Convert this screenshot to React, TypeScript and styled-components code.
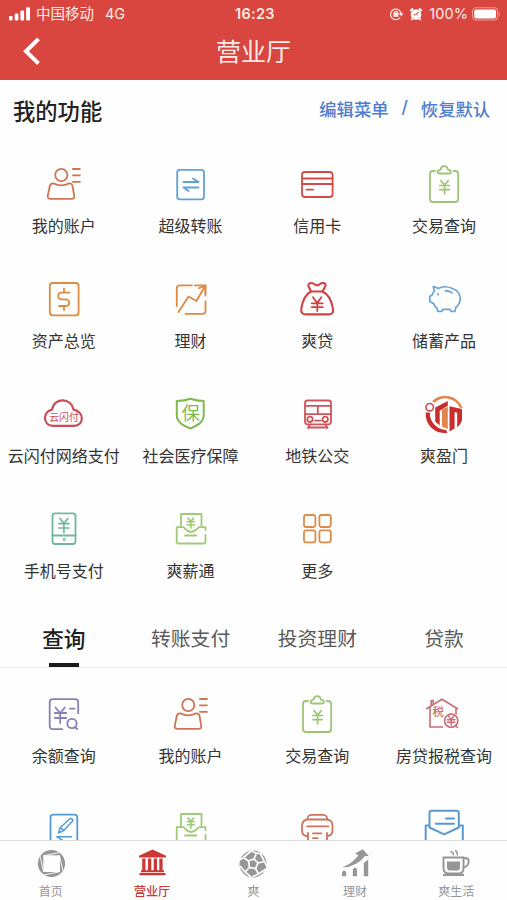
import React from "react";
import styled, { createGlobalStyle } from "styled-components";

const GlobalStyle = createGlobalStyle`
  * { box-sizing: border-box; }
  body { margin: 0; background: #fff; }
`;

const Screen = styled.div`
  width: 507px;
  height: 900px;
  display: flex;
  flex-direction: column;
  overflow: hidden;
  background: #fefefe;
  color: #333;
  font-family: Inter, "Noto Sans CJK SC", sans-serif;
`;

const Header = styled.header`
  flex: none;
  height: 80px;
  background: #d94640;
  color: #ffebe6;
`;

const StatusBar = styled.div`
  display: grid;
  grid-template-columns: 1fr auto 1fr;
  align-items: center;
  height: 28px;
  padding: 0 6px 0 9px;
  font-size: 14.5px;
  line-height: 28px;
`;

const StatusGroup = styled.div<{ $end?: boolean }>`
  display: flex;
  align-items: center;
  justify-content: ${(p) => (p.$end ? "flex-end" : "flex-start")};
  white-space: nowrap;
`;

const Carrier = styled.span`
  margin-left: 5px;
`;

const Network = styled.span`
  margin-left: 11px;
`;

const Clock = styled.span`
  font-weight: 600;
  letter-spacing: 0.3px;
`;

const BatteryText = styled.span`
  margin: 0 4px 0 6px;
  letter-spacing: 0.1px;
`;

const AlarmSlot = styled.span`
  display: flex;
  margin-left: 6px;
`;

const TitleBar = styled.div`
  display: grid;
  grid-template-columns: 60px 1fr 60px;
  align-items: center;
  height: 45px;
`;

const BackButton = styled.button`
  display: flex;
  padding: 0 0 0 22px;
  border: 0;
  background: none;
`;

const Title = styled.h1`
  margin: 0;
  padding-top: 2px;
  text-align: center;
  font-size: 25px;
  font-weight: 400;
  line-height: 45px;
`;

const Main = styled.main`
  flex: 1;
  min-height: 0;
  overflow: hidden;
`;

const SectionHead = styled.div`
  display: flex;
  align-items: center;
  justify-content: space-between;
  height: 62px;
  padding: 0 17px 0 13px;
`;

const SectionTitle = styled.h2`
  margin: 0;
  padding-top: 1px;
  font-size: 22.3px;
  font-weight: 500;
  line-height: 62px;
  color: #222;
`;

const Actions = styled.div`
  display: flex;
  gap: 13px;
  padding-bottom: 6px;
  font-size: 17.3px;
  font-weight: 500;
  color: #4f7dcf;
`;

const Grid = styled.div<{ $top: number; $height: number }>`
  display: grid;
  grid-template-columns: repeat(4, 1fr);
  grid-auto-rows: 115px;
  height: ${(p) => p.$height}px;
  padding-top: ${(p) => p.$top}px;
`;

const Cell = styled.div`
  display: flex;
  flex-direction: column;
  align-items: center;
`;

const CellLabel = styled.span`
  margin-top: 9px;
  padding-left: 1px;
  font-size: 16px;
  line-height: 26px;
  white-space: nowrap;
`;

const Glyph = styled.svg<{ $color: string }>`
  display: block;
  width: 44px;
  height: 40px;
  overflow: visible;
  fill: none;
  stroke: ${(p) => p.$color};
  stroke-width: 1.8;
  stroke-linecap: round;
  stroke-linejoin: round;
`;

const GlyphText = styled.text<{ $size: number; $color: string; $weight?: number }>`
  fill: ${(p) => p.$color};
  stroke: none;
  font-size: ${(p) => p.$size}px;
  font-weight: ${(p) => p.$weight ?? 400};
  text-anchor: middle;
`;

const Tabs = styled.div`
  display: grid;
  grid-template-columns: repeat(4, 1fr);
  height: 58px;
  border-bottom: 1px solid #f0f0f0;
`;

const Tab = styled.button<{ $active?: boolean }>`
  display: flex;
  flex-direction: column;
  align-items: center;
  justify-content: space-between;
  padding: 0 0 0 1px;
  border: 0;
  background: none;
  font-family: inherit;
  font-size: ${(p) => (p.$active ? 21.7 : 19.8)}px;
  font-weight: ${(p) => (p.$active ? 500 : 400)};
  line-height: 58px;
  color: ${(p) => (p.$active ? "#1d1d1d" : "#5a5a5a")};
  white-space: nowrap;

  &::after {
    content: "";
    width: 30px;
    height: 4px;
    margin-top: -5px;
    background: ${(p) => (p.$active ? "#1b1b1b" : "transparent")};
  }
`;

const NavBar = styled.nav`
  flex: none;
  display: grid;
  grid-template-columns: repeat(5, 1fr);
  height: 60px;
  border-top: 1px solid #dcdcdc;
  background: #fefefe;
`;

const NavItem = styled.div<{ $active?: boolean }>`
  display: flex;
  flex-direction: column;
  align-items: center;
  padding-top: 8px;
  font-size: 12px;
  font-weight: ${(p) => (p.$active ? 500 : 400)};
  line-height: 18px;
  color: ${(p) => (p.$active ? "#cb3835" : "#969696")};
`;

const NavGlyph = styled.svg`
  display: block;
  width: 30px;
  height: 30px;
  margin-bottom: 4px;
  overflow: visible;
  fill: currentColor;
`;

const Yen = ({ x, y, s = 1 }: { x: number; y: number; s?: number }) => (
  <path
    strokeWidth={1.7 / s}
    transform={`translate(${x} ${y}) scale(${s})`}
    d="M-4-7L0-2.3 4-7M0-2.3V7M-5-1.8H5M-5 2.5H5"
  />
);

const glyphs: Record<string, { color: string; art: React.ReactNode }> = {
  account: {
    color: "#cf7553",
    art: (
      <>
        <circle cx="-1.7" cy="-9" r="6.1" />
        <path d="M-9.4-.6Q-1.8 3.5 6-.6C8.5-.6 9-.3 9.5 2L11.2 11.5C11.5 14 10.8 14.8 8.5 14.8H-12.3C-14.8 14.8-15.6 13.6-15.2 11.5L-13.2 2C-12.7-.2-11.8-.8-9.4-.6Z" />
        <path strokeLinecap="butt" d="M9.2-15H17.6M9.2-8.7H17.6M9.2-2.2H17.6" />
      </>
    ),
  },
  transfer: {
    color: "#62a1d5",
    art: (
      <>
        <rect x="-12.8" y="-14.2" width="26.8" height="29.6" rx="2.6" />
        <path d="M-6.5-2H8.5L3-5.5M8.5 3.5H-6.5L-1.5 7" />
      </>
    ),
  },
  card: {
    color: "#d34a48",
    art: (
      <>
        <rect x="-15" y="-12" width="30.6" height="25" rx="3" />
        <path d="M-15-5.5H15.6M-15 0H15.6M-10.5 5.7H-4" />
      </>
    ),
  },
  clipboard: {
    color: "#9fc477",
    art: (
      <>
        <path d="M-9-13H-11Q-14-13-14-10V15Q-14 18-11 18H11Q14.2 18 14.2 15V-10Q14.2-13 11-13H9.5" />
        <path d="M-4.5-10.5C-7.5-10.5-7-14-3.2-14.4C-3-19 3.5-19 3.7-14.4C7.5-14 8-10.5 5-10.5Z" />
        <Yen x={0.6} y={3.2} s={0.95} />
      </>
    ),
  },
  assets: {
    color: "#dc8c42",
    art: (
      <>
        <rect x="-13.2" y="-16" width="28.8" height="32.3" rx="3" />
        <path d="M6.5-6.3H-1.2C-6-6.3-6 .3-1.2.3H2.3C7.5.3 7.5 7 2.3 7H-4M1-10.5V-6.3M1 7V11" />
      </>
    ),
  },
  growth: {
    color: "#dc8c42",
    art: (
      <>
        <path d="M-13.2 7V-10.5Q-13.2-13.7-10-13.7H2M4.7-13.7H15.5V-3.5M15.5 2.3V11.8Q15.5 14.8 12.5 14.8H-4.5" />
        <path d="M-11.5 13L-1.5-2.5 6.5 2 15-13M9-10.8L15.3-13.5V-6" />
      </>
    ),
  },
  bag: {
    color: "#d34240",
    art: (
      <g strokeWidth="2.1">
        <path d="M-6-7.5L-8.5-12.8C-9.6-15.8-5-17.2-2.5-14.8C-.7-13.3 1-13.3 2.7-14.8C5.5-17.2 10-15.5 8.2-12.5L5.5-7.5Z" />
        <path d="M-6-7.5C-11-5-14.5 2-15.7 9.5C-16.2 13.8-14.5 15.4-11 15.4H11.3C15.3 15.4 16.5 13.7 16 9.8C14.7 2 11-5 5.5-7.5" />
        <path strokeWidth="1.8" d="M-4-1.7L.3 4 4.3-1.7M.3 4V12M-5.3 4.3H5.8M-5.3 8.2H5.8" />
      </g>
    ),
  },
  piggy: {
    color: "#68a4d8",
    art: (
      <g strokeWidth="1.7">
        <path d="M-10.8-12.3C-8.5-12.2-7.5-11.5-6-10.6C-2-12.6 4-12.4 8-10.8C13.5-8.8 16.4-4.8 16.2 0C16 3.5 14.5 6.3 11.8 8.5L11 12.3H7L6 10.3H-1.2L-2.2 12.3H-6.2L-7.2 9C-9.2 7.6-9.6 6-10.4 4.6L-14.2 2.6V-2.8L-11.8-4C-11.2-6-10-7-9.6-8.2Z" />
        <path d="M1.2-8.1Q5-8.6 8-6.2" />
        <circle cx="-6" cy="-4.8" r=".35" />
      </g>
    ),
  },
  cloud: {
    color: "#c94c58",
    art: (
      <>
        <path strokeWidth="2.2" d="M-10 11.8H11C21.5 11.8 21.5-2.8 10.6-4.3C8.5-16.5-9-17.2-11-4.3C-20.5-2.8-20.5 11.8-10 11.8Z" />
        <GlyphText x="1" y="6.6" $size={9.8} $color="#c94c58">云闪付</GlyphText>
      </>
    ),
  },
  shield: {
    color: "#7fb951",
    art: (
      <>
        <path strokeWidth="2" d="M-13.2-13Q-5.5-13 .5-15.2Q6.5-13 13.7-13V1C13.7 8.5 7 11.5.5 14.5C-6.5 11.5-13.2 8.5-13.2 1Z" />
        <GlyphText x="0.7" y="5.9" $size={18.5} $color="#7fb951">保</GlyphText>
      </>
    ),
  },
  train: {
    color: "#cf555c",
    art: (
      <>
        <rect x="-12" y="-13.5" width="26" height="23.8" rx="2.5" />
        <path d="M-12-8.2H14M-12 .2H14M.8-8.2V.2M-2 6.7H3.7M-7 10.5L-9 14M8.5 10.5L10.5 14M-9 13.5H10.5" />
        <circle cx="-7" cy="5.3" r="2.7" />
        <circle cx="8.2" cy="5.3" r="2.7" />
      </>
    ),
  },
  gate: {
    color: "#c92e2c",
    art: (
      <g stroke="none">
        <path fill="#e2844d" d="M-12-12.8A18.7 18.7 0 0 1 18.7-6L16-6.3A16 16 0 0 0-9.5-11.3Z" />
        <path fill="#c92e2c" d="M-18.2-1.5A18.6 18.6 0 0 0 3.5 18.7L2 16A17 17 0 0 1-14.2-1.5Z" />
        <circle cx="-14.3" cy="-6.8" r="3.7" fill="none" stroke="#c94d55" strokeWidth="1.6" />
        <path fill="#c92e2c" d="M-8.8-6.5L3.8-13V-8.3L-4.3-3.3V11.5L-8.8 7.5Z" />
        <path fill="#e2844d" d="M-2-4.5L3.8-7.2V15L-2 12.5Z" />
        <path fill="#c92e2c" d="M5.5-7.8L18-5V6.5Q16.8 10.5 13.2 13.5V-1.2L10.6-2V14.5L5.5 17.5Z" />
      </g>
    ),
  },
  phone: {
    color: "#72b6a0",
    art: (
      <>
        <rect x="-10.5" y="-15.6" width="23" height="30.6" rx="2.7" />
        <path d="M-10.5 6.5H12.5" />
        <circle cx="1.2" cy="10.5" r=".5" />
        <Yen x={0.9} y={-3.5} s={1} />
      </>
    ),
  },
  salary: {
    color: "#a0ca7a",
    art: (
      <>
        <path d="M-9-3.5V-15H11.5V-3.5M-5 6.5H6.5M15.5 1V-1.8H9.5C7.5-1.8 6.5 3 1 3C-4 3-5-1.8-7-1.8H-13.3V12.5Q-13.3 14.5-11.5 14.5H13.5Q15.5 14.5 15.5 12.5V6" />
        <Yen x={0.8} y={-6} s={0.7} />
      </>
    ),
  },
  more: {
    color: "#dc8c4a",
    art: (
      <>
        <rect x="-13" y="-14" width="11.4" height="12" rx="2" />
        <rect x="2.4" y="-14" width="11.4" height="12" rx="2" />
        <rect x="-13" y="1.3" width="11.4" height="12" rx="2" />
        <rect x="2.4" y="1.3" width="11.4" height="12" rx="2" />
      </>
    ),
  },
  balance: {
    color: "#8681b7",
    art: (
      <>
        <path d="M-.8 15.2H-9.8Q-13.3 15.2-13.3 12V-11.5Q-13.3-14.8-10-14.8H12Q15.2-14.8 15.2-11.5V-.8M7-5.3H11.5" />
        <path d="M-7.5-6.5L-2.8-.8 1.8-6.5M-2.8-.8V9M-8.2-1H3.2M-8.2 4H3.2" />
        <circle cx="9" cy="9.5" r="4.7" />
        <path d="M12 13L14.2 15.2" />
      </>
    ),
  },
  house: {
    color: "#cb6c77",
    art: (
      <g strokeWidth="1.6">
        <path d="M-17.5-5.3L-2-14.8 13.5-5.3M-12.8-8.5V-13.5H-10.8V-9.8M-14-6V13H-1.5M12-5V0" />
        <circle cx="7.2" cy="6.7" r="6.6" />
        <path d="M12 12L13.5 13.5" />
        <g transform="translate(7.2 6.8) scale(.62)"><path strokeWidth="2.4" d="M-4-7L0-2.3 4-7M0-2.3V7M-6-1.8H6M-6 2.5H6" /></g>
        <GlyphText x="-5.7" y="2.3" $size={11.5} $color="#cb6c77" $weight={500}>税</GlyphText>
      </g>
    ),
  },
  edit: {
    color: "#559bd2",
    art: (
      <>
        <path d="M-12.5 16V-11.5Q-12.5-14.3-9.7-14.3H11.5Q14.3-14.3 14.3-11.5V16" />
        <path strokeWidth="1.5" d="M-4.5 4L-2.8-1.3 6.5-10Q9-11.3 10-8.5L1 1.3ZM-2.8-1.3L1 1.3M8.5 7.8H-6L-1 11" />
      </>
    ),
  },
  printer: {
    color: "#d0735d",
    art: (
      <path d="M-9.5-9.5C-9.5-13.5-8-14.2-5-14.2H5.5C9-14.2 10-13 10.5-9.5M-9 7H-11Q-15 6-15 1V-3Q-14.5-9.5-9-9.5H10Q15.5-9 15.5-3V1Q15.5 6 11 7H10M-10-2.7H11.5M-9 4V14M10 4V14M-4 4.3H4.5M-4 9.2H.5" />
    ),
  },
  mail: {
    color: "#5799d0",
    art: (
      <path strokeWidth="2" d="M-14.5-2.5V-16Q-14.5-18.2-12.5-18.2H12.5Q14.8-18.2 14.8-16V-2.5M-14.5-3.5H-18.3V14M14.8-3.5H18.8V14M-14.5-1.5L.2 5.3 14.8-1.5M2-10.5H10M-8.2-5.3H10" />
    ),
  },
};

const myFunctions: [string, string][] = [
  ["account", "我的账户"],
  ["transfer", "超级转账"],
  ["card", "信用卡"],
  ["clipboard", "交易查询"],
  ["assets", "资产总览"],
  ["growth", "理财"],
  ["bag", "爽贷"],
  ["piggy", "储蓄产品"],
  ["cloud", "云闪付网络支付"],
  ["shield", "社会医疗保障"],
  ["train", "地铁公交"],
  ["gate", "爽盈门"],
  ["phone", "手机号支付"],
  ["salary", "爽薪通"],
  ["more", "更多"],
];

const queryFunctions: [string, string][] = [
  ["balance", "余额查询"],
  ["account", "我的账户"],
  ["clipboard", "交易查询"],
  ["house", "房贷报税查询"],
  ["edit", ""],
  ["salary", ""],
  ["printer", ""],
  ["mail", ""],
];

const navItems: { label: string; art: React.ReactNode }[] = [
  {
    label: "首页",
    art: (
      <>
        <circle cx="15.5" cy="14.5" r="13.6" />
        <path fill="#fefefe" d="M7.3 6.3H24V23H7.3Z" />
        <path fill="none" stroke="#fefefe" strokeWidth=".9" d="M7.3 6.8L23.5 3.5M23.5 6.5L27 22M23.5 22.8L7.5 26M7.5 22.5L4 7" />
      </>
    ),
  },
  {
    label: "营业厅",
    art: <path d="M15.5 .6L29 6.8V8.6H2V6.8ZM5.2 9.6H8.5V21.3H5.2ZM11 9.6H14.3V21.3H11ZM16.7 9.6H20V21.3H16.7ZM22.3 9.6H25.6V21.3H22.3ZM4 21.3H27V23.2H4ZM2.5 24H28.5V26.3H2.5Z" />,
  },
  {
    label: "爽",
    art: (
      <>
        <circle cx="15" cy="15" r="13.5" />
        <path
          fill="none"
          stroke="#fefefe"
          strokeWidth="1.7"
          d="M10.5 12L16 10 20 14 17.5 19.5 11.5 18.5ZM10.5 12L5.5 8.5M16 10L18.5 4M20 14L26.5 12.5M17.5 19.5L20.5 25M11.5 18.5L7 23M1.5 11L5.5 8.5 13 2M13 2L18.5 4 23.5 5M22 4L26.5 12.5 28.5 17M28 20L20.5 25 14 28M13 28L7 23 2 17"
        />
      </>
    ),
  },
  {
    label: "理财",
    art: (
      <>
        <path d="M2 18.3Q12 15 18.3 6.5L15.3 4.3 22.8 .3 29 7.3 25 7Q16 18.5 2 18.3Z" />
        <path d="M2 27.3V23.5Q4.1 19.5 6.2 23.5V27.3ZM12.8 27.3V20.5Q14.9 16.5 17 20.5V27.3ZM23.8 27.3V14L28.2 10.5V27.3Z" />
      </>
    ),
  },
  {
    label: "爽生活",
    art: (
      <>
        <path
          fill="none"
          stroke="currentColor"
          strokeWidth="1.9"
          d="M2.5 8.5H22.5V19Q22.5 24.5 17.5 24.5H8Q2.5 24.5 2.5 19ZM22.5 9.3H25Q28 9.3 27.7 12.5 27.3 17.5 22.5 18.5"
        />
        <path d="M6 12.5H19V18.5Q19 21.5 16 21.5H9Q6 21.5 6 18.5ZM2 25H23V27H2Z" />
        <path fill="none" stroke="currentColor" strokeWidth="1.5" d="M9.5 2.5Q13 3.5 12.3 6.5M14 1.5Q17 3 16.2 6.5" />
      </>
    ),
  },
];

const Cells = ({ items }: { items: [string, string][] }) => (
  <>
    {items.map(([icon, label]) => (
      <Cell key={icon}>
        <Glyph $color={glyphs[icon].color} viewBox="-22 -20 44 40">
          {glyphs[icon].art}
        </Glyph>
        {label && <CellLabel>{label}</CellLabel>}
      </Cell>
    ))}
  </>
);

const tabs = ["查询", "转账支付", "投资理财", "贷款"];

export default function App() {
  return (
    <Screen>
      <GlobalStyle />
      <Header>
        <StatusBar>
          <StatusGroup>
            <svg width="22" height="14" viewBox="0 0 22 14" fill="#fff">
              <rect x="0" y="9" width="3.5" height="4.5" rx="1" />
              <rect x="5.7" y="6.5" width="3.7" height="7" rx="1" />
              <rect x="11.4" y="3.5" width="3.7" height="10" rx="1" />
              <rect x="17.1" y="0.3" width="3.9" height="13.2" rx="1" />
            </svg>
            <Carrier>中国移动</Carrier>
            <Network>4G</Network>
          </StatusGroup>
          <Clock>16:23</Clock>
          <StatusGroup $end>
            <svg width="14" height="14" viewBox="0 0 14 14" fill="none" stroke="#ffebe6" strokeWidth="1.2">
              <path d="M11.2 10.5A5.3 5.3 0 1 1 12.2 7M10.3 6.3L12.3 8.2 14 6.2" />
              <rect x="4.9" y="6.2" width="4" height="3" fill="#ffebe6" />
              <path d="M5.5 6V5.3Q6.9 3.3 8.3 5.3V6" />
            </svg>
            <AlarmSlot>
              <svg width="14" height="14" viewBox="0 0 14 14">
                <circle cx="7" cy="7.5" r="5.3" fill="#fff" />
                <path d="M1.3 4L4 1.5M12.7 4L10 1.5M3.5 11.5L2.3 13M10.5 11.5L11.7 13" stroke="#fff" strokeWidth="2" />
                <path d="M9.5 4.8L7 7.8H4.5" fill="none" stroke="#d94640" strokeWidth="1.1" />
              </svg>
            </AlarmSlot>
            <BatteryText>100%</BatteryText>
            <svg width="29" height="14" viewBox="0 0 29 14">
              <rect x="0.6" y="0.8" width="25" height="12.2" rx="3.4" fill="none" stroke="#eb9b94" strokeWidth="1.1" />
              <rect x="2.2" y="2.4" width="21.8" height="9" rx="2" fill="#fff" />
              <path d="M27 4.7Q29 7 27 9.3Z" fill="#eb9b94" />
            </svg>
          </StatusGroup>
        </StatusBar>
        <TitleBar>
          <BackButton aria-label="返回">
            <svg width="20" height="30" viewBox="0 0 20 30" fill="none" stroke="#fff" strokeWidth="4">
              <path d="M16.5 1.8L4 14.3 16.5 26.5" />
            </svg>
          </BackButton>
          <Title>营业厅</Title>
        </TitleBar>
      </Header>
      <Main>
        <SectionHead>
          <SectionTitle>我的功能</SectionTitle>
          <Actions>
            <span>编辑菜单</span>
            <span>/</span>
            <span>恢复默认</span>
          </Actions>
        </SectionHead>
        <Grid $top={22} $height={468}>
          <Cells items={myFunctions} />
        </Grid>
        <Tabs>
          {tabs.map((tab, i) => (
            <Tab key={tab} $active={i === 0}>
              {tab}
            </Tab>
          ))}
        </Tabs>
        <Grid $top={26} $height={256}>
          <Cells items={queryFunctions} />
        </Grid>
      </Main>
      <NavBar>
        {navItems.map((item) => (
          <NavItem key={item.label} $active={item.label === "营业厅"}>
            <NavGlyph viewBox="0 0 30 30">{item.art}</NavGlyph>
            {item.label}
          </NavItem>
        ))}
      </NavBar>
    </Screen>
  );
}
